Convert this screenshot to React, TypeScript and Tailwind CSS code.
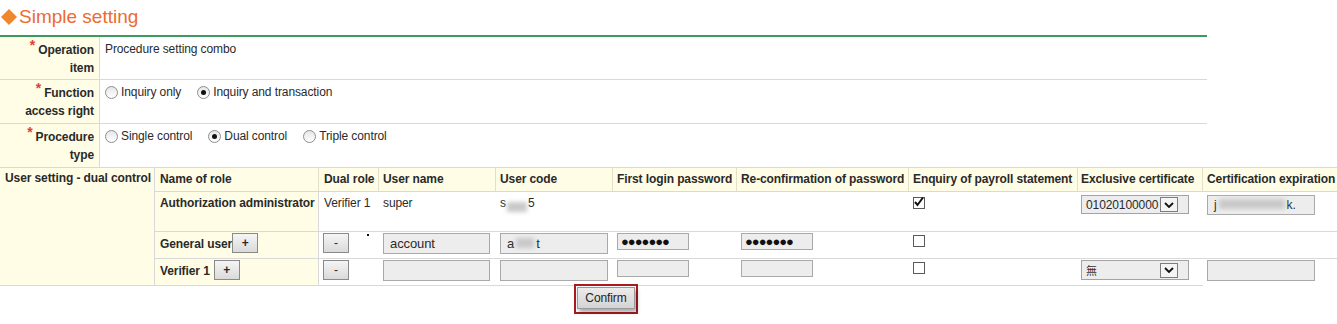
import React from 'react'

function Radio({ checked }: { checked?: boolean }) {
  return (
    <span className="relative inline-block w-[13px] h-[13px] rounded-full border border-[#8e8e8e] bg-linear-to-b from-[#e6e6e6] to-white shrink-0">
      {checked && <span className="absolute left-[3px] top-[3px] w-[5px] h-[5px] rounded-full bg-[#111]" />}
    </span>
  )
}

function Option({ label, checked }: { label: string; checked?: boolean }) {
  return (
    <span className="flex items-center gap-[3px] mr-[16px]">
      <Radio checked={checked} />
      <span>{label}</span>
    </span>
  )
}

function Star() {
  return <span className="relative -top-[4px] mr-[3px] text-[14px] text-[#e0402d]">*</span>
}

function Check({ checked }: { checked?: boolean }) {
  return (
    <span className="relative inline-block w-[12px] h-[12px] border border-[#5a5a5a] bg-white">
      {checked && (
        <svg viewBox="0 0 12 12" className="absolute -left-px -top-[2px] w-[12px] h-[12px]">
          <path d="M2 6 L4.5 9 L10 1.5" fill="none" stroke="#111" strokeWidth="2" />
        </svg>
      )}
    </span>
  )
}

function SmallBtn({ children }: { children: React.ReactNode }) {
  return (
    <span className="inline-flex w-[26px] h-[20px] items-center justify-center border border-[#8a8a8a] bg-linear-to-b from-[#f5f5f5] to-[#dadada] text-[12px] leading-none">
      {children}
    </span>
  )
}

function Blur({ w }: { w: number }) {
  return <span className="inline-block h-[10px] bg-[#c9c9c9] blur-[2px]" style={{ width: w }} />
}

function Field({ w, h, children }: { w: string; h: string; children?: React.ReactNode }) {
  return (
    <div className={`${w} ${h} flex items-center border border-[#a9a9a9] bg-[#ededed] pl-[6px] text-[12px]`}>
      {children}
    </div>
  )
}

function Select({ value, h }: { value: React.ReactNode; h: string }) {
  return (
    <div className={`w-[108px] ${h} flex items-center justify-between border border-[#a3a3a3] bg-[#ededed] pl-[4px] pr-[10px]`}>
      <span>{value}</span>
      <span className="flex w-[18px] h-[15px] items-center justify-center border border-[#7d7d7d] bg-[#f4f4f4]">
        <svg viewBox="0 0 10 6" className="w-[10px] h-[6px]">
          <path d="M1 1 L5 5 L9 1" fill="none" stroke="#111" strokeWidth="1.8" />
        </svg>
      </span>
    </div>
  )
}

function Dots() {
  return <span className="text-[13px] tracking-[-1px] font-bold text-[#111]">●●●●●●●</span>
}

export default function App() {
  return (
    <div className="w-[1337px] h-[324px] bg-white text-[12px] leading-[18px] tracking-[-0.1px] whitespace-nowrap text-[#2a2a2a] font-['Liberation_Sans',Arial,sans-serif] overflow-hidden">
      {/* Title */}
      <div className="h-[35px] flex items-start pt-[6px]">
        <svg viewBox="0 0 18 18" className="w-[18px] h-[18px] mt-[2px] mr-[1px]">
          <path d="M9 1 L17 9 L9 17 L1 9 Z" fill="#f0862d" />
        </svg>
        <span className="text-[19px] leading-[22px] tracking-normal text-[#ee6a30]">Simple setting</span>
      </div>

      {/* Top settings */}
      <div className="w-[1207px] border-t-2 border-[#3c9a5f]">
        <div className="flex h-[43px] border-b border-[#d9d9d9]">
          <div className="w-[100px] shrink-0 bg-[#fffde6] border-r border-[#dedbc6] pt-[3px] pr-[5px] text-right font-bold">
            <Star />Operation<br />item
          </div>
          <div className="pt-[3px] pl-[5px]">Procedure setting combo</div>
        </div>
        <div className="flex h-[44px] border-b border-[#d9d9d9]">
          <div className="w-[100px] shrink-0 bg-[#fffde6] border-r border-[#dedbc6] pt-[3px] pr-[5px] text-right font-bold">
            <Star />Function<br />access right
          </div>
          <div className="flex items-start pt-[3px] pl-[5px]">
            <Option label="Inquiry only" />
            <Option label="Inquiry and transaction" checked />
          </div>
        </div>
        <div className="flex h-[43px]">
          <div className="w-[100px] shrink-0 bg-[#fffde6] border-r border-[#dedbc6] pt-[3px] pr-[5px] text-right font-bold">
            <Star />Procedure<br />type
          </div>
          <div className="flex items-start pt-[3px] pl-[5px]">
            <Option label="Single control" />
            <Option label="Dual control" checked />
            <Option label="Triple control" />
          </div>
        </div>
      </div>

      {/* User setting */}
      <div className="flex w-[1337px] border-t border-[#d9d9d9]">
        <div className="w-[155px] shrink-0 bg-[#fffde6] border-r border-b border-[#d9d9d9] pl-[5px] pt-[1px] font-bold">
          User setting - dual control
        </div>
        <div className="flex-1 flex flex-col">
          {/* header */}
          <div className="flex h-[24px] bg-[#fffde6] font-bold border-b border-[#d9d9d9]">
            <div className="w-[164px] h-full flex items-center pb-[2px] pl-[5px] border-r border-[#e4e0c6]">Name of role</div>
            <div className="w-[60px] h-full flex items-center pb-[2px] pl-[5px] border-r border-[#e4e0c6]">Dual role</div>
            <div className="w-[117px] h-full flex items-center pb-[2px] pl-[4px] border-r border-[#e4e0c6]">User name</div>
            <div className="w-[117px] h-full flex items-center pb-[2px] pl-[4px] border-r border-[#e4e0c6]">User code</div>
            <div className="w-[124px] h-full flex items-center pb-[2px] pl-[4px] border-r border-[#e4e0c6]">First login password</div>
            <div className="w-[172px] h-full flex items-center pb-[2px] pl-[4px] border-r border-[#e4e0c6]">Re-confirmation of password</div>
            <div className="w-[169px] h-full flex items-center pb-[2px] pl-[4px] border-r border-[#e4e0c6]">Enquiry of payroll statement</div>
            <div className="w-[125px] h-full flex items-center pb-[2px] pl-[3px] border-r border-[#e4e0c6]">Exclusive certificate</div>
            <div className="flex-1 h-full flex items-center pb-[2px] pl-[4px]">Certification expiration</div>
          </div>

          {/* row 1 */}
          <div className="flex h-[40px] border-b border-[#d9d9d9]">
            <div className="w-[164px] bg-[#fffde6] border-r border-[#d9d9d9] pl-[5px] pt-[2px] font-bold">Authorization administrator</div>
            <div className="w-[60px] pl-[5px] pt-[2px]">Verifier 1</div>
            <div className="w-[117px] pl-[4px] pt-[2px]">super</div>
            <div className="w-[117px] pl-[4px] pt-[2px] flex items-start">
              <span>s</span>
              <span className="mt-[5px] mx-[1px]"><Blur w={20} /></span>
              <span>5</span>
            </div>
            <div className="w-[124px]" />
            <div className="w-[172px]" />
            <div className="w-[169px] pl-[4px] pt-[4px]"><Check checked /></div>
            <div className="w-[125px] pl-[3px] pt-[3px]">
              <Select h="h-[19px]" value={<span className="text-[12px]">01020100000</span>} />
            </div>
            <div className="flex-1 pl-[4px] pt-[3px]">
              <Field w="w-[108px]" h="h-[20px]">
                <span>j</span>
                <span className="mx-[2px]"><Blur w={66} /></span>
                <span>k.</span>
              </Field>
            </div>
          </div>

          {/* row 2 */}
          <div className="flex h-[27px] border-b border-[#d9d9d9]">
            <div className="w-[164px] bg-[#fffde6] border-r border-[#d9d9d9] pl-[5px] pt-[1px] font-bold flex items-start">
              <span className="mt-[2px]">General user</span>
              <SmallBtn>+</SmallBtn>
            </div>
            <div className="w-[60px] pl-[4px] pt-[1px] flex items-start">
              <SmallBtn>-</SmallBtn>
              <span className="ml-[18px] mt-[1px] w-[2px] h-[2px] bg-[#111]" />
            </div>
            <div className="w-[117px] pl-[4px] pt-[1px]">
              <Field w="w-[107px]" h="h-[21px]"><span className="text-[13px]">account</span></Field>
            </div>
            <div className="w-[117px] pl-[4px] pt-[1px]">
              <Field w="w-[108px]" h="h-[21px]">
                <span className="text-[13px]">a</span>
                <span className="mx-[2px]"><Blur w={18} /></span>
                <span className="text-[13px]">t</span>
              </Field>
            </div>
            <div className="w-[124px] pl-[4px] pt-[1px]">
              <Field w="w-[72px]" h="h-[17px]"><span className="-ml-[3px]"><Dots /></span></Field>
            </div>
            <div className="w-[172px] pl-[4px] pt-[1px]">
              <Field w="w-[72px]" h="h-[17px]"><span className="-ml-[3px]"><Dots /></span></Field>
            </div>
            <div className="w-[169px] pl-[4px] pt-[2px]"><Check /></div>
            <div className="w-[125px]" />
            <div className="flex-1" />
          </div>

          {/* row 3 */}
          <div className="flex h-[27px]">
            <div className="w-[164px] bg-[#fffde6] border-r border-b border-[#d9d9d9] pl-[5px] pt-[1px] font-bold flex items-start">
              <span className="mt-[2px] mr-[4px]">Verifier 1</span>
              <SmallBtn>+</SmallBtn>
            </div>
            <div className="w-[60px] pl-[4px] pt-[1px] border-b border-[#d9d9d9]"><SmallBtn>-</SmallBtn></div>
            <div className="w-[117px] pl-[4px] pt-[1px] border-b border-[#d9d9d9]"><Field w="w-[107px]" h="h-[21px]" /></div>
            <div className="w-[117px] pl-[4px] pt-[1px] border-b border-[#d9d9d9]"><Field w="w-[108px]" h="h-[21px]" /></div>
            <div className="w-[124px] pl-[4px] pt-[1px] border-b border-[#d9d9d9]"><Field w="w-[72px]" h="h-[17px]" /></div>
            <div className="w-[172px] pl-[4px] pt-[1px] border-b border-[#d9d9d9]"><Field w="w-[72px]" h="h-[17px]" /></div>
            <div className="w-[169px] pl-[4px] pt-[2px] border-b border-[#d9d9d9]"><Check /></div>
            <div className="w-[125px] pl-[3px] pt-[1px] border-b border-[#d9d9d9]">
              <Select h="h-[20px]" value={<span className="text-[11px] text-[#333] font-['Noto_Sans_CJK_TC',sans-serif]">無</span>} />
            </div>
            <div className="flex-1 pl-[4px] pt-[1px]"><Field w="w-[108px]" h="h-[21px]" /></div>
          </div>
        </div>
      </div>

      {/* Confirm */}
      <div className="w-[1212px] flex justify-center -mt-[2px]">
        <div className="border-2 border-[#a61c21] p-[1px] pb-[3px]">
          <button className="h-[22px] px-[7px] border border-[#9a9a9a] bg-linear-to-b from-[#ececec] to-[#d4d4d4] text-[12px] text-[#222] shadow-[2px_3px_4px_rgba(0,0,0,0.35)]">
            Confirm
          </button>
        </div>
      </div>
    </div>
  )
}
